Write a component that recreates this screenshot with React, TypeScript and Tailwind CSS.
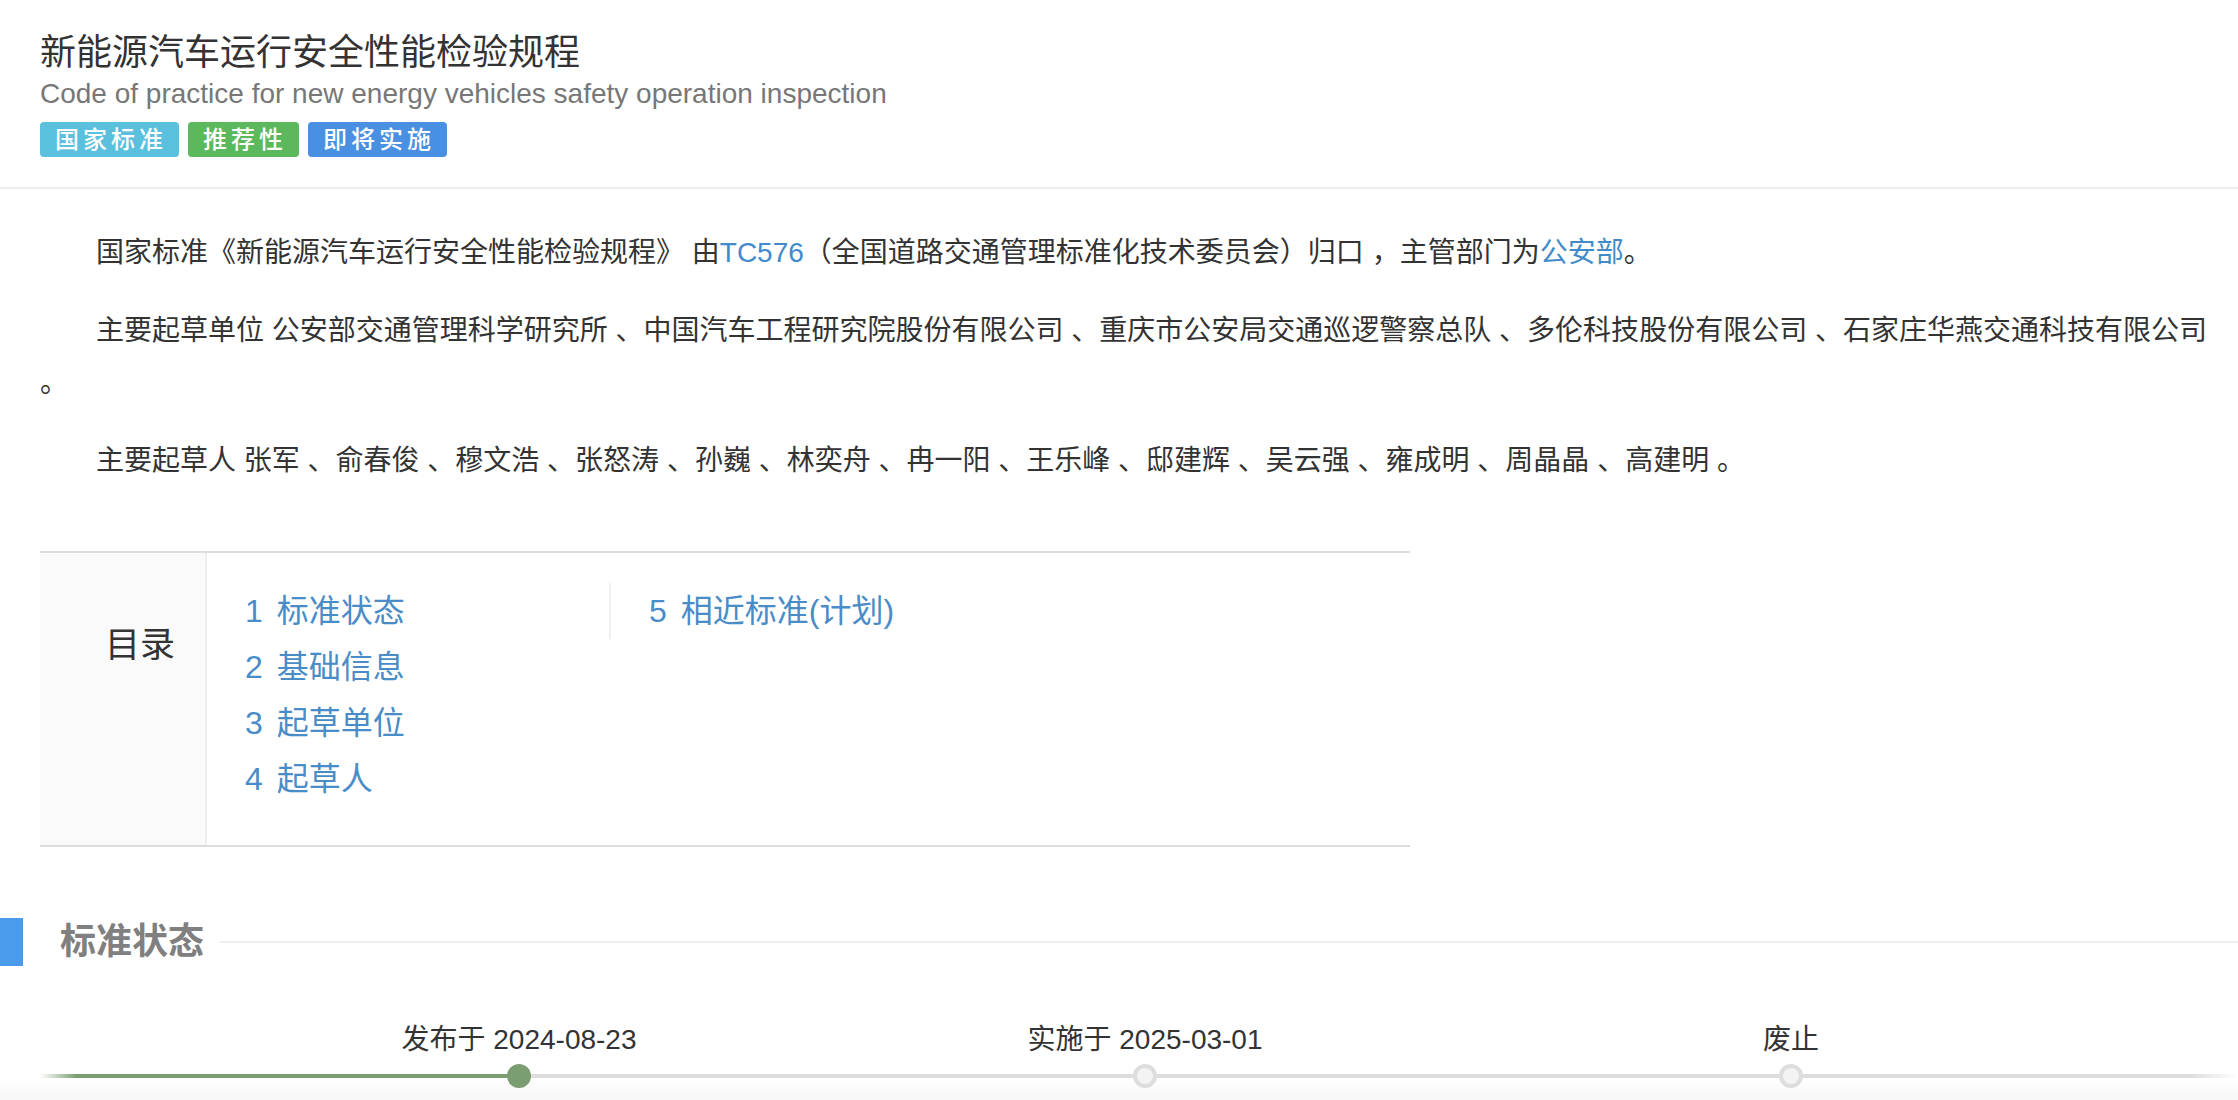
import React from 'react';

const font = 'font-["Liberation_Sans","Noto_Sans_CJK_SC",sans-serif]';

const tags = [
  { label: '国家标准', color: 'bg-[#5bc0de]' },
  { label: '推荐性', color: 'bg-[#5cb85c]' },
  { label: '即将实施', color: 'bg-[#4a90e2]' },
];

const drafters = ['张军', '俞春俊', '穆文浩', '张怒涛', '孙巍', '林奕舟', '冉一阳', '王乐峰', '邸建辉', '吴云强', '雍成明', '周晶晶', '高建明'];

const units = ['公安部交通管理科学研究所', '中国汽车工程研究院股份有限公司', '重庆市公安局交通巡逻警察总队', '多伦科技股份有限公司', '石家庄华燕交通科技有限公司'];

function Header() {
  return (
    <div className="pl-[40px] pt-[31px] border-b-2 border-[#eeeeee] pb-[30px]">
      <h1 className="text-[36px] leading-[44px] text-[#333333] font-normal">新能源汽车运行安全性能检验规程</h1>
      <p className="mt-[2px] text-[28px] leading-[34px] text-[#777777]">
        Code of practice for new energy vehicles safety operation inspection
      </p>
      <div className="mt-[11px] flex gap-[9px]">
        {tags.map((t) => (
          <span
            key={t.label}
            className={`${t.color} h-[35px] flex items-center pl-[15px] pr-[12px] rounded-[4px] text-white text-[24px] font-medium tracking-[4px]`}
          >
            {t.label}
          </span>
        ))}
      </div>
    </div>
  );
}

function Intro() {
  return (
    <div className="pl-[40px] pr-[12px] pt-[38px] text-[28px] leading-[52px] text-[#333333]">
      <p className="indent-[56px]">
        国家标准《新能源汽车运行安全性能检验规程》 由<a className="text-[#428bca]">TC576</a>
        （全国道路交通管理标准化技术委员会）归口 ，主管部门为<a className="text-[#428bca]">公安部</a>。
      </p>
      <p className="indent-[56px] mt-[26px]">主要起草单位 {units.join(' 、')} 。</p>
      <p className="indent-[56px] mt-[26px]">主要起草人 {drafters.join(' 、')} 。</p>
    </div>
  );
}

function Toc() {
  const col1 = ['标准状态', '基础信息', '起草单位', '起草人'];
  return (
    <div className="ml-[40px] mt-[64px] w-[1370px] flex border-y-2 border-[#dddddd]">
      <div className="w-[167px] bg-[#fafafa] border-r-2 border-[#eeeeee] text-right pr-[30px] pt-[68px] text-[35px] leading-[48px] text-[#333333]">
        目录
      </div>
      <div className="flex-1 flex items-start pl-[38px] pt-[30px] pb-[38px] text-[32px] leading-[56px] text-[#4a8cc7]">
        <ul className="w-[364px]">
          {col1.map((c, i) => (
            <li key={c}>
              <span className="mr-[14px]">{i + 1}</span>
              {c}
            </li>
          ))}
        </ul>
        <ul className="border-l-2 border-[#f0f0f0] pl-[38px]">
          <li>
            <span className="mr-[14px]">5</span>相近标准(计划)
          </li>
        </ul>
      </div>
    </div>
  );
}

function SectionTitle({ title }: { title: string }) {
  return (
    <div className="mt-[71px] flex items-center">
      <div className="w-[23px] h-[48px] bg-[#4a9be9]" />
      <h2 className="ml-[37px] text-[36px] leading-[48px] font-bold text-[#808080]">{title}</h2>
      <div className="ml-[16px] flex-1 h-[2px] bg-[#eeeeee]" />
    </div>
  );
}

function Timeline() {
  const steps = [
    { label: '发布于 2024-08-23', done: true, ml: 'ml-[479px]' },
    { label: '实施于 2025-03-01', done: false, ml: 'ml-[626px]' },
    { label: '废止', done: false, ml: 'ml-[646px]' },
  ];
  return (
    <div className="relative z-10 ml-[40px] mt-[54px]">
      <div className="absolute left-0 w-[479px] top-[54px] h-[4px] bg-[linear-gradient(to_right,#ffffff,#7b9d72_37px)]" />
      <div className="absolute left-[479px] right-0 top-[54px] h-[4px] bg-[linear-gradient(to_right,#dddddd_calc(100%_-_48px),#ffffff)]" />
      <div className="relative flex">
        {steps.map((s) => (
          <div key={s.label} className={`${s.ml} w-0 flex flex-col items-center`}>
            <span className="whitespace-nowrap text-[28px] leading-[40px] text-[#333333]">{s.label}</span>
            <span
              className={
                s.done
                  ? 'mt-[4px] w-[24px] h-[24px] rounded-full bg-[#7b9d72] shrink-0'
                  : 'mt-[4px] w-[24px] h-[24px] rounded-full bg-[#f3f3f3] border-[4px] border-[#dddddd] shrink-0'
              }
            />
          </div>
        ))}
      </div>
    </div>
  );
}

export default function App() {
  return (
    <div className={`${font} relative h-[1100px] overflow-hidden bg-white`}>
      <Header />
      <Intro />
      <Toc />
      <SectionTitle title="标准状态" />
      <Timeline />
      <div className="absolute inset-x-0 bottom-0 h-[22px] bg-gradient-to-b from-white to-[#f6f6f6]" />
    </div>
  );
}
